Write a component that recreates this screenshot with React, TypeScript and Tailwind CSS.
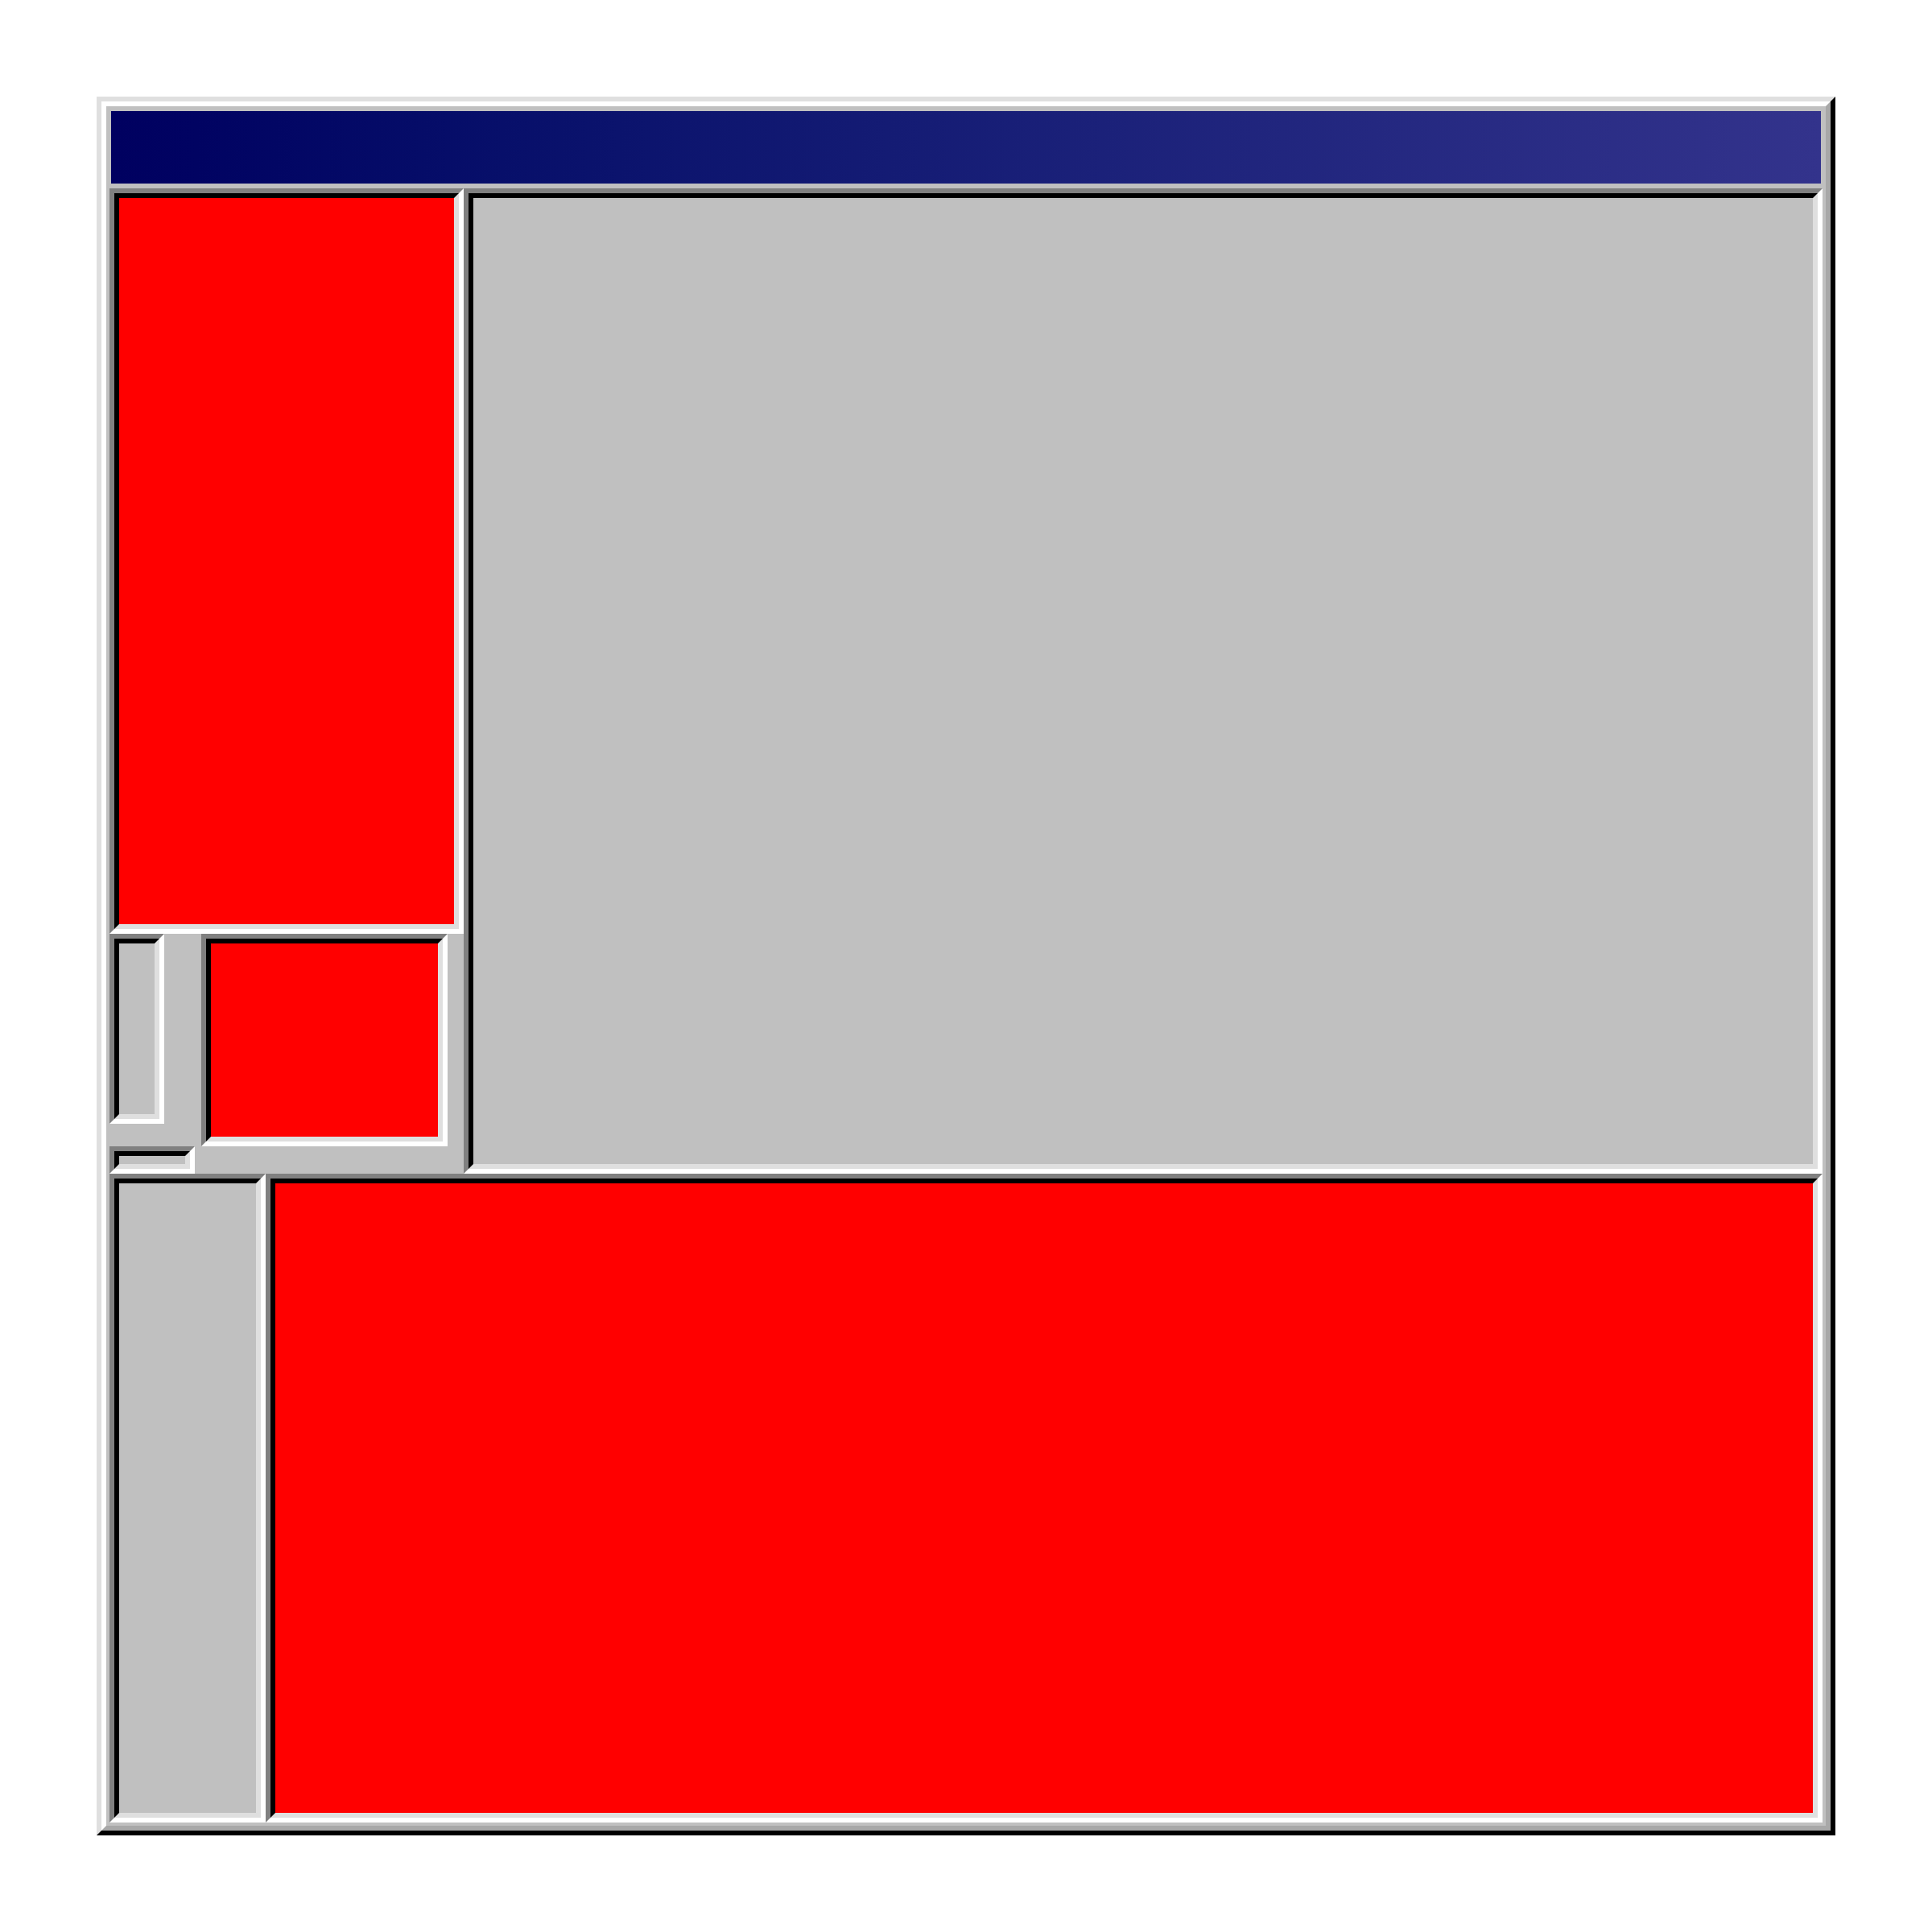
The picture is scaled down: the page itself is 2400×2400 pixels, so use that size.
import React from 'react';

// Sunken (inset) bevel box, two 6px borders like a classic desktop widget
const Sunken: React.FC<{ className?: string; fill?: string }> = ({ className = '', fill = 'bg-[#c0c0c0]' }) => (
  <div className={`border-[6px] border-t-[#808080] border-l-[#808080] border-b-white border-r-white ${className}`}>
    <div className={`w-full h-full border-[6px] border-t-black border-l-black border-b-[#dfdfdf] border-r-[#dfdfdf] ${fill}`} />
  </div>
);

export default function App() {
  return (
    <div className="bg-white p-[120px] min-h-[2400px]">
      {/* Window frame */}
      <div className="w-[2160px] h-[2160px] border-[6px] border-t-[#dfdfdf] border-l-[#dfdfdf] border-b-black border-r-black">
        <div className="h-full flex flex-col border-[6px] border-t-white border-l-white border-b-[#a8a8a8] border-r-[#a8a8a8] bg-[#c0c0c0]">
          {/* Title bar */}
          <div className="mx-[6px] mt-[6px] h-[90px] shrink-0 bg-linear-to-r from-[#000060] to-[#33338c]" />

          {/* Body */}
          <div className="mt-[6px] mx-[4px] mb-[4px] flex-1 flex flex-col">
            <div className="h-[1224px] shrink-0 flex">
              <div className="w-[440px] shrink-0 flex flex-col">
                <Sunken className="h-[926px] shrink-0" fill="bg-[#ff0000]" />
                <div className="flex-1 flex">
                  <div className="w-[114px] shrink-0 flex flex-col justify-between">
                    <Sunken className="w-[68px] h-[236px]" />
                    <Sunken className="w-[106px] h-[34px]" />
                  </div>
                  <Sunken className="w-[306px] h-[264px]" fill="bg-[#ff0000]" />
                </div>
              </div>
              <Sunken className="flex-1" />
            </div>
            <div className="flex-1 flex">
              <Sunken className="w-[194px] shrink-0" />
              <Sunken className="flex-1" fill="bg-[#ff0000]" />
            </div>
          </div>
        </div>
      </div>
    </div>
  );
}
